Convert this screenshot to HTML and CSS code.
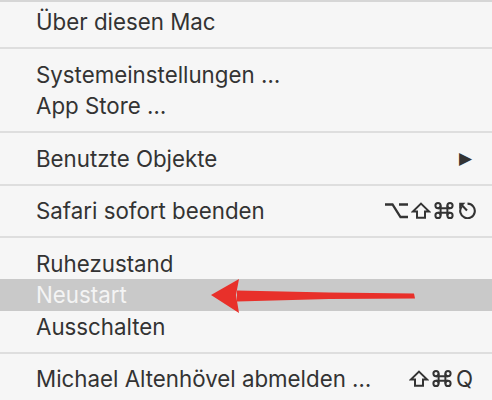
FILE: index.html
```html
<!DOCTYPE html>
<html lang="de">
<head>
<meta charset="utf-8">
<link rel="stylesheet" href="styles.css">
</head>
<body>
<div class="menu">
  <div class="item"><span class="label">Über diesen Mac</span></div>
  <div class="sep"></div>
  <div class="item"><span class="label">Systemeinstellungen …</span></div>
  <div class="item"><span class="label">App Store …</span></div>
  <div class="sep"></div>
  <div class="item"><span class="label">Benutzte Objekte</span><span class="arrow">▶</span></div>
  <div class="sep"></div>
  <div class="item"><span class="label">Safari sofort beenden</span>
    <span class="keys keys-safari">
      <svg class="key" viewBox="0 0 25 17" width="25" height="17"><path d="M1 2.5 H8.5 L16.5 15 H24 M15 2.5 H24" fill="none" stroke="#333" stroke-width="2.3"/></svg>
      <svg class="key" viewBox="0 0 20 17" width="20" height="17"><path d="M10 1.6 L18.2 9.6 H14 V15.8 H6 V9.6 H1.8 Z" fill="none" stroke="#333" stroke-width="2" stroke-linejoin="miter"/></svg>
      <svg class="key" viewBox="0 0 22 17" width="22" height="17"><g fill="none" stroke="#333" stroke-width="2"><circle cx="5" cy="3.6" r="2.6"/><circle cx="17" cy="3.6" r="2.6"/><circle cx="5" cy="13.4" r="2.6"/><circle cx="17" cy="13.4" r="2.6"/><path d="M7.6 3.6 V13.4 M14.4 3.6 V13.4 M5 6.2 H17 M5 10.8 H17"/></g></svg>
      <svg class="key" viewBox="0 0 21 17" width="21" height="17"><path d="M10.5 1.6 A7.3 7.3 0 1 1 4.6 4.6" fill="none" stroke="#333" stroke-width="2.1"/><path d="M4.2 2.6 L10 8.6" stroke="#333" stroke-width="2.1"/><path d="M2.2 0.8 L8.4 0.8 L2.2 7 Z" fill="#333"/></svg>
    </span></div>
  <div class="sep"></div>
  <div class="item"><span class="label">Ruhezustand</span></div>
  <div class="item selected"><span class="label">Neustart</span></div>
  <div class="item"><span class="label">Ausschalten</span></div>
  <div class="sep"></div>
  <div class="item"><span class="label">Michael Altenhövel abmelden …</span>
    <span class="keys keys-logout">
      <svg class="key" viewBox="0 0 20 17" width="20" height="17"><path d="M10 1.6 L18.2 9.6 H14 V15.8 H6 V9.6 H1.8 Z" fill="none" stroke="#333" stroke-width="2" stroke-linejoin="miter"/></svg>
      <svg class="key" viewBox="0 0 22 17" width="22" height="17"><g fill="none" stroke="#333" stroke-width="2"><circle cx="5" cy="3.6" r="2.6"/><circle cx="17" cy="3.6" r="2.6"/><circle cx="5" cy="13.4" r="2.6"/><circle cx="17" cy="13.4" r="2.6"/><path d="M7.6 3.6 V13.4 M14.4 3.6 V13.4 M5 6.2 H17 M5 10.8 H17"/></g></svg>
      <span class="q">Q</span>
    </span></div>
  <svg class="red-arrow" viewBox="0 0 220 40" width="220" height="40">
    <path d="M28 12.5 L120 14.5 L205 15.5 L206 20.5 L120 21 L28 23.5 Z" fill="#e8302a"/>
    <path d="M2 17 L30 1 L27 17 L30 35 Z" fill="#e8302a"/>
  </svg>
</div>
</body>
</html>
```
FILE: styles.css
```css
html, body {
  margin: 0;
  padding: 0;
  background: #f6f6f6;
}
.menu {
  position: relative;
  width: 492px;
  height: 400px;
  overflow: hidden;
  box-sizing: border-box;
  border-top: 2px solid #d6d6d6;
  padding-top: 4px;
  font-family: Inter, "Liberation Sans", sans-serif;
  font-size: 22.3px;
  color: #333333;
}
.item {
  height: 31.5px;
  display: flex;
  align-items: center;
  justify-content: space-between;
  padding: 0 14px 0 36px;
}
.selected {
  background: #c9c9c9;
  color: #f4f4f4;
}
.sep {
  height: 21px;
  display: flex;
  align-items: center;
}
.sep::before {
  content: "";
  display: block;
  width: 100%;
  height: 2px;
  background: #dedede;
}
.arrow {
  font-size: 17px;
  font-family: "DejaVu Sans", sans-serif;
  margin-right: 6px;
}
.keys {
  display: flex;
  align-items: center;
  gap: 2px;
}
.keys-logout {
  margin-right: 5px;
}
.key {
  display: block;
}
.q {
  font-size: 22.3px;
  line-height: 1;
  margin-left: 1px;
}
.red-arrow {
  position: absolute;
  left: 209px;
  top: 276px;
}
```
